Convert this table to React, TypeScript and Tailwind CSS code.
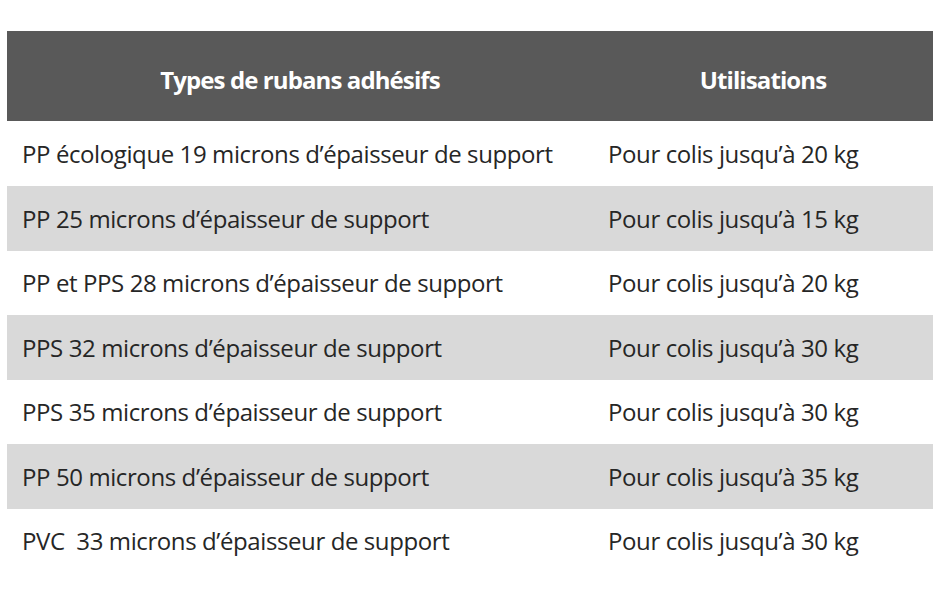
import React from "react";

const rows = [
  { type: "PP écologique 19 microns d’épaisseur de support", use: "Pour colis jusqu’à 20 kg", h: "h-[65px]" },
  { type: "PP 25 microns d’épaisseur de support", use: "Pour colis jusqu’à 15 kg", h: "h-[65px]" },
  { type: "PP et PPS 28 microns d’épaisseur de support", use: "Pour colis jusqu’à 20 kg", h: "h-[64px]" },
  { type: "PPS 32 microns d’épaisseur de support", use: "Pour colis jusqu’à 30 kg", h: "h-[65px]" },
  { type: "PPS 35 microns d’épaisseur de support", use: "Pour colis jusqu’à 30 kg", h: "h-[64px]" },
  { type: "PP 50 microns d’épaisseur de support", use: "Pour colis jusqu’à 35 kg", h: "h-[65px]" },
  { type: "PVC\u00a0 33 microns d’épaisseur de support", use: "Pour colis jusqu’à 30 kg", h: "h-[64px]" },
];

const App = () => {
  return (
    <div className="w-[946px] h-[604px] bg-white pt-[31px] pl-[7px] font-['Open_Sans',sans-serif] text-[24px] tracking-[-0.4px] text-[#262626]">
      <div className="w-[926px]">
        {/* HEADER */}
        <div className="flex h-[90px] bg-[#595959] text-white font-bold tracking-[-0.9px]">
          <div className="w-[586px] flex items-center justify-center pt-[7px]">Types de rubans adhésifs</div>
          <div className="flex-1 flex items-center justify-center pt-[7px]">Utilisations</div>
        </div>

        {/* ROWS */}
        {rows.map((row, i) => (
          <div
            key={i}
            className={`flex ${row.h} ${i % 2 === 1 ? "bg-[#d9d9d9]" : "bg-white"}`}
          >
            <div className="w-[586px] flex items-center pl-[15px] whitespace-pre">{row.type}</div>
            <div className="flex-1 flex items-center pl-[15px]">{row.use}</div>
          </div>
        ))}
      </div>
    </div>
  );
};

export default App;
